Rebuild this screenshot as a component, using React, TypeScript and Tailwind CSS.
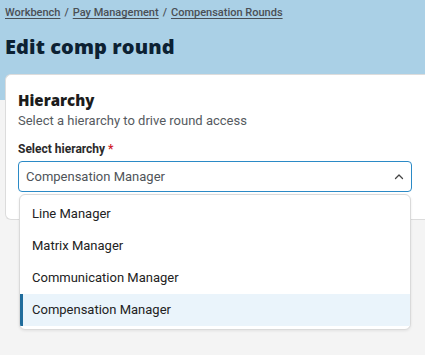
import React from "react";

const items = ["Line Manager", "Matrix Manager", "Communication Manager", "Compensation Manager"];

export default function App() {
  return (
    <div className="min-h-[355px] w-[425px] bg-[#f4f4f4] overflow-hidden" style={{ fontFamily: "Roboto, 'Liberation Sans', sans-serif" }}>
      <div className="h-[100px] bg-[#aad0e6] pl-[5px] pt-[6px]">
        <div className="flex items-center gap-[4px] text-[11px] font-medium text-[#4a4f55] leading-[14px]">
          <span className="underline underline-offset-[2px]">Workbench</span>
          <span>/</span>
          <span className="underline underline-offset-[2px]">Pay Management</span>
          <span>/</span>
          <span className="underline underline-offset-[2px]">Compensation Rounds</span>
        </div>
        <h1 className="mt-[15px] text-[20px] font-extrabold text-[#0c2133] leading-[24px] tracking-[0.1px]" style={{ fontFamily: "'Open Sans', Lato, sans-serif" }}>
          Edit comp round
        </h1>
      </div>
      <div className="relative -mt-[26px] ml-[5px] rounded-tl-[6px] rounded-bl-[6px] border border-r-0 border-[#dcdcdc] bg-white pl-[12px] pr-[13px] pt-[15px] pb-[27px]">
        <div className="text-[15px] font-extrabold text-[#1c1c1c] leading-[20px]" style={{ fontFamily: "'Open Sans', Lato, sans-serif" }}>Hierarchy</div>
        <div className="mt-[2px] text-[13px] text-[#555a60] leading-[18px]">Select a hierarchy to drive round access</div>
        <div className="mt-[11px] text-[12px] font-bold text-[#2a2a2a] leading-[16px]">
          Select hierarchy <span className="text-[#d0212a]">*</span>
        </div>
        <div className="mt-[4px] flex h-[31px] items-center justify-between rounded-[4px] border border-[#2b8ac6] pl-[7px] pr-[6px]">
          <span className="text-[13px] text-[#4f5459]">Compensation Manager</span>
          <svg width="12" height="12" viewBox="0 0 12 12" fill="none">
            <path d="M2.5 7.5 L6 4 L9.5 7.5" stroke="#444" strokeWidth="1.3" strokeLinecap="round" strokeLinejoin="round" />
          </svg>
        </div>
      </div>
      <div className="absolute left-[19px] top-[194px] w-[392px] overflow-hidden rounded-[6px] border border-[#dadada] bg-white py-[3px] shadow-[0_1px_3px_rgba(0,0,0,0.08)]">
        {items.map((it, i) => {
          const sel = i === items.length - 1;
          return (
            <div
              key={it}
              className={
                sel
                  ? "flex h-[32px] items-center border-l-[3px] border-[#1f6c9c] bg-[#eaf4fb] pl-[9px] text-[13px] text-[#222]"
                  : "flex h-[32px] items-center border-l-[3px] border-transparent pl-[9px] text-[13px] text-[#222]"
              }
            >
              {it}
            </div>
          );
        })}
      </div>
    </div>
  );
}
